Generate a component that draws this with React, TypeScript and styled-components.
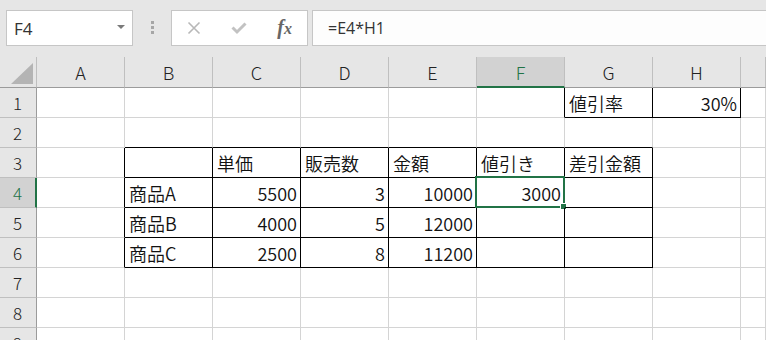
import React from "react";
import styled, { createGlobalStyle } from "styled-components";

// 表示する列（I 列は右端で切れていて見出しが見えないので空欄扱い）
const COLS = ["A", "B", "C", "D", "E", "F", "G", "H", ""];
const ROWS = [1, 2, 3, 4, 5, 6, 7, 8, 9];

type CellData = { v: string; num?: boolean };
const DATA: Record<string, CellData> = {
  G1: { v: "値引率" },
  H1: { v: "30%", num: true },
  C3: { v: "単価" },
  D3: { v: "販売数" },
  E3: { v: "金額" },
  F3: { v: "値引き" },
  G3: { v: "差引金額" },
  B4: { v: "商品A" },
  C4: { v: "5500", num: true },
  D4: { v: "3", num: true },
  E4: { v: "10000", num: true },
  F4: { v: "3000", num: true },
  B5: { v: "商品B" },
  C5: { v: "4000", num: true },
  D5: { v: "5", num: true },
  E5: { v: "12000", num: true },
  B6: { v: "商品C" },
  C6: { v: "2500", num: true },
  D6: { v: "8", num: true },
  E6: { v: "11200", num: true },
};

// 罫線を引く範囲 [colFrom, colTo, rowFrom, rowTo] (列は 0 = A)
const BOXES = [
  [6, 7, 1, 1],
  [1, 6, 3, 6],
];
const inBox = (c: number, r: number) =>
  BOXES.some(([c0, c1, r0, r1]) => c >= c0 && c <= c1 && r >= r0 && r <= r1);

const SEL_COL = 5; // F
const SEL_ROW = 4;

const GRID = "#d4d4d4";
const GREEN = "#217346";

export default function App() {
  return (
    <Page>
      <Global />
      <TopBar>
        <NameBox>
          <span>F4</span>
          <Caret />
        </NameBox>
        <Grip>
          <i />
          <i />
          <i />
        </Grip>
        <FxButtons>
          <svg width="14" height="14" viewBox="0 0 14 14">
            <path d="M1.5 1.5 L12.5 12.5 M12.5 1.5 L1.5 12.5" stroke="#b8b8b8" strokeWidth="1.6" fill="none" />
          </svg>
          <svg width="16" height="14" viewBox="0 0 16 14">
            <path d="M1.5 6.5 L6 11 L14.5 2.5" stroke="#c2c2c2" strokeWidth="3" fill="none" />
          </svg>
          <Fx>
            f<span>x</span>
          </Fx>
        </FxButtons>
        <FormulaInput>=E4*H1</FormulaInput>
      </TopBar>

      <Sheet>
        <Corner>
          <CornerTri />
        </Corner>
        {COLS.map((c, i) => (
          <ColHead key={i} $sel={i === SEL_COL}>
            {c}
          </ColHead>
        ))}
        {ROWS.map((r) => (
          <React.Fragment key={r}>
            <RowHead $sel={r === SEL_ROW}>{r}</RowHead>
            {COLS.map((c, ci) => {
              const d = c ? DATA[c + r] : undefined;
              const right = inBox(ci, r) || inBox(ci + 1, r);
              const bottom = inBox(ci, r) || inBox(ci, r + 1);
              const sel = ci === SEL_COL && r === SEL_ROW;
              return (
                <Cell key={ci} $right={right} $bottom={bottom} $num={d?.num}>
                  {d?.v}
                  {sel && (
                    <Selection>
                      <Handle />
                    </Selection>
                  )}
                </Cell>
              );
            })}
          </React.Fragment>
        ))}
      </Sheet>
    </Page>
  );
}

const Global = createGlobalStyle`
  body { margin: 0; background: #fff; }
  * { box-sizing: border-box; }
`;

const Page = styled.div`
  width: 766px;
  height: 340px;
  overflow: hidden;
  background: #e6e6e6;
  font-family: "Noto Sans CJK JP", "Noto Sans", sans-serif;
`;

const TopBar = styled.div`
  display: flex;
  align-items: flex-start;
  height: 57px;
  padding: 10px 0 0 6px;
`;

const NameBox = styled.div`
  width: 127px;
  height: 36px;
  background: #fff;
  border: 1px solid #c6c6c6;
  display: flex;
  align-items: center;
  justify-content: space-between;
  padding: 0 7px 0 7px;
  font-family: "Open Sans", "Noto Sans", sans-serif;
  font-size: 17px;
  color: #333;
`;

const Caret = styled.span`
  width: 0;
  height: 0;
  border-left: 4px solid transparent;
  border-right: 4px solid transparent;
  border-top: 4px solid #7a7a7a;
  margin-top: -3px;
`;

const Grip = styled.div`
  width: 38px;
  display: flex;
  flex-direction: column;
  align-items: center;
  gap: 2px;
  padding-top: 11px;
  i {
    width: 3px;
    height: 3px;
    background: #a6a6a6;
  }
`;

const FxButtons = styled.div`
  width: 137px;
  height: 36px;
  background: #fff;
  border: 1px solid #c6c6c6;
  display: flex;
  align-items: center;
  justify-content: space-between;
  padding: 0 15px 0 15px;
`;

const Fx = styled.span`
  font-family: "Liberation Serif", "DejaVu Serif", serif;
  font-style: italic;
  font-weight: bold;
  font-size: 20px;
  line-height: 1;
  color: #666;
  margin-top: -3px;
  span {
    font-size: 16px;
  }
`;

const FormulaInput = styled.div`
  flex: 1;
  margin-left: 4px;
  margin-right: -4px;
  height: 36px;
  background: #fdfdfd;
  border: 1px solid #c6c6c6;
  display: flex;
  align-items: center;
  padding-left: 15px;
  font-family: "Open Sans", "Noto Sans", sans-serif;
  font-size: 16px;
  color: #333;
`;

const Sheet = styled.div`
  display: grid;
  grid-template-columns: 37px repeat(8, 88px) 1fr;
  grid-template-rows: 31px repeat(9, 30px);
  background: #fff;
`;

const Corner = styled.div`
  position: relative;
  background: #e6e6e6;
  border-right: 1px solid #bfbfbf;
  border-bottom: 1px solid #9b9b9b;
`;

const CornerTri = styled.div`
  position: absolute;
  right: 3px;
  bottom: 3px;
  width: 0;
  height: 0;
  border-left: 22px solid transparent;
  border-bottom: 21px solid #b4b4b4;
`;

const ColHead = styled.div<{ $sel?: boolean }>`
  background: ${(p) => (p.$sel ? "#d2d2d2" : "#e6e6e6")};
  color: ${(p) => (p.$sel ? GREEN : "#222")};
  border-right: 1px solid #bfbfbf;
  border-bottom: ${(p) => (p.$sel ? `2px solid ${GREEN}` : "1px solid #9b9b9b")};
  display: flex;
  align-items: center;
  justify-content: center;
  font-size: 18px;
  font-weight: 300;
  padding-top: ${(p) => (p.$sel ? "1px" : "0")};
`;

const RowHead = styled.div<{ $sel?: boolean }>`
  background: ${(p) => (p.$sel ? "#d2d2d2" : "#e6e6e6")};
  color: ${(p) => (p.$sel ? GREEN : "#222")};
  border-right: ${(p) => (p.$sel ? `2px solid ${GREEN}` : "1px solid #9b9b9b")};
  border-bottom: 1px solid #bfbfbf;
  display: flex;
  align-items: center;
  justify-content: center;
  font-size: 17px;
  font-weight: 300;
  padding-right: ${(p) => (p.$sel ? "0" : "1px")};
`;

const Cell = styled.div<{ $right?: boolean; $bottom?: boolean; $num?: boolean }>`
  position: relative;
  border-right: 1px solid ${(p) => (p.$right ? "#000" : GRID)};
  border-bottom: 1px solid ${(p) => (p.$bottom ? "#000" : GRID)};
  display: flex;
  align-items: center;
  justify-content: ${(p) => (p.$num ? "flex-end" : "flex-start")};
  padding: 0 3px 0 4px;
  font-size: 18px;
  font-weight: 350;
  color: #111;
  white-space: nowrap;
`;

const Selection = styled.div`
  position: absolute;
  left: -2px;
  top: -2px;
  right: -1px;
  bottom: -1px;
  border: 2px solid ${GREEN};
  pointer-events: none;
`;

const Handle = styled.div`
  position: absolute;
  right: -4px;
  bottom: -4px;
  width: 7px;
  height: 7px;
  background: ${GREEN};
  border: 1px solid #fff;
`;
